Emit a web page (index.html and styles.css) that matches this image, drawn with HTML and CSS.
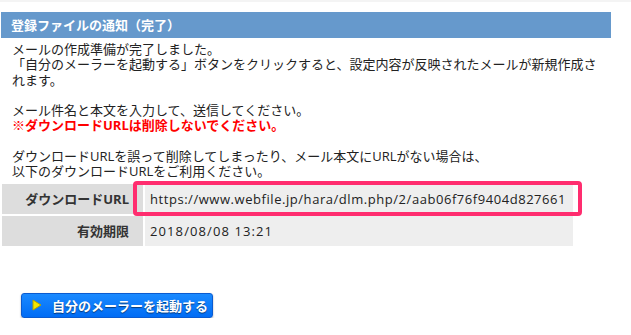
FILE: index.html
```html
<!DOCTYPE html>
<html lang="ja">
<head>
<meta charset="utf-8">
<link rel="stylesheet" href="styles.css">
</head>
<body>
<div class="topline"></div>
<div class="page">
  <h2 class="title">登録ファイルの通知（完了）</h2>
  <div class="msg">
    <p>メールの作成準備が完了しました。<br>「自分のメーラーを起動する」ボタンをクリックすると、設定内容が反映されたメールが新規作成されます。</p>
    <p>メール件名と本文を入力して、送信してください。<br><strong class="warn">※ダウンロードURLは削除しないでください。</strong></p>
    <p>ダウンロードURLを誤って削除してしまったり、メール本文にURLがない場合は、<br>以下のダウンロードURLをご利用ください。</p>
  </div>
  <div class="info">
    <div class="row">
      <div class="label">ダウンロードURL</div>
      <div class="value url">https://www.webfile.jp/hara/dlm.php/2/aab06f76f9404d827661<span class="highlight"></span></div>
    </div>
    <div class="row">
      <div class="label">有効期限</div>
      <div class="value date">2018/08/08 13:21</div>
    </div>
  </div>
  <div class="actions">
    <button class="mailer-btn" type="button"><svg class="play" width="10" height="12" viewBox="0 0 10 12"><polygon points="1,1 9,6 1,11" fill="#f2e600" stroke="#b3a400" stroke-width="1"/></svg><span>自分のメーラーを起動する</span></button>
  </div>
</div>
</body>
</html>
```

FILE: styles.css
```css
html, body {
  margin: 0;
  padding: 0;
  background: #fff;
}
body {
  font-family: "Open Sans", "Noto Sans CJK JP", sans-serif;
  font-size: 13px;
  color: #222;
}
.topline {
  height: 2px;
  background: #f4f4f4;
}
.page {
  width: 610px;
  margin-left: 1px;
  padding-top: 10px;
}
.title {
  margin: 0;
  height: 26px;
  line-height: 26px;
  background: #6699cc;
  color: #fff;
  font-size: 13px;
  font-weight: bold;
  padding-left: 10px;
}
.msg {
  padding: 4px 12px 0 11px;
  line-height: 15.3px;
}
.msg p {
  margin: 0 0 15.3px 0;
}
.msg p:last-child {
  margin-bottom: 0;
}
.warn {
  color: #ff0000;
  font-weight: bold;
}
.info {
  margin: 4px 0 0 1px;
  width: 571px;
  display: flex;
  flex-direction: column;
  gap: 2px;
}
.row {
  display: flex;
  gap: 2px;
  height: 30px;
}
.label {
  width: 141px;
  flex: none;
  background: #dddddd;
  font-weight: bold;
  color: #333;
  text-align: right;
  padding-right: 14px;
  box-sizing: border-box;
  line-height: 30px;
}
.value {
  flex: 1;
  background: #eeeeee;
  padding-left: 5px;
  line-height: 30px;
  color: #222;
  white-space: nowrap;
}
.url {
  position: relative;
  letter-spacing: 0.55px;
}
.date {
  letter-spacing: 1.1px;
}
.highlight {
  position: absolute;
  left: -12px;
  top: -3px;
  width: 449px;
  height: 35px;
  box-sizing: border-box;
  border: 4px solid #ff2d6f;
  border-radius: 4px;
}
.actions {
  margin-top: 47px;
  padding-left: 20px;
}
.mailer-btn {
  display: flex;
  align-items: center;
  gap: 10px;
  height: 25px;
  width: 192px;
  padding: 0 0 0 10px;
  border: 1px solid #0a5bd0;
  border-radius: 3px;
  background: linear-gradient(#1a8aff, #006cf5);
  box-shadow: 0 1px 2px rgba(0,0,0,0.35);
  color: #fff;
  font-family: "Noto Sans CJK JP", sans-serif;
  font-size: 13px;
  font-weight: bold;
  text-shadow: 0 1px 1px rgba(0,0,0,0.5);
  cursor: pointer;
}
.play {
  flex: none;
}
```
